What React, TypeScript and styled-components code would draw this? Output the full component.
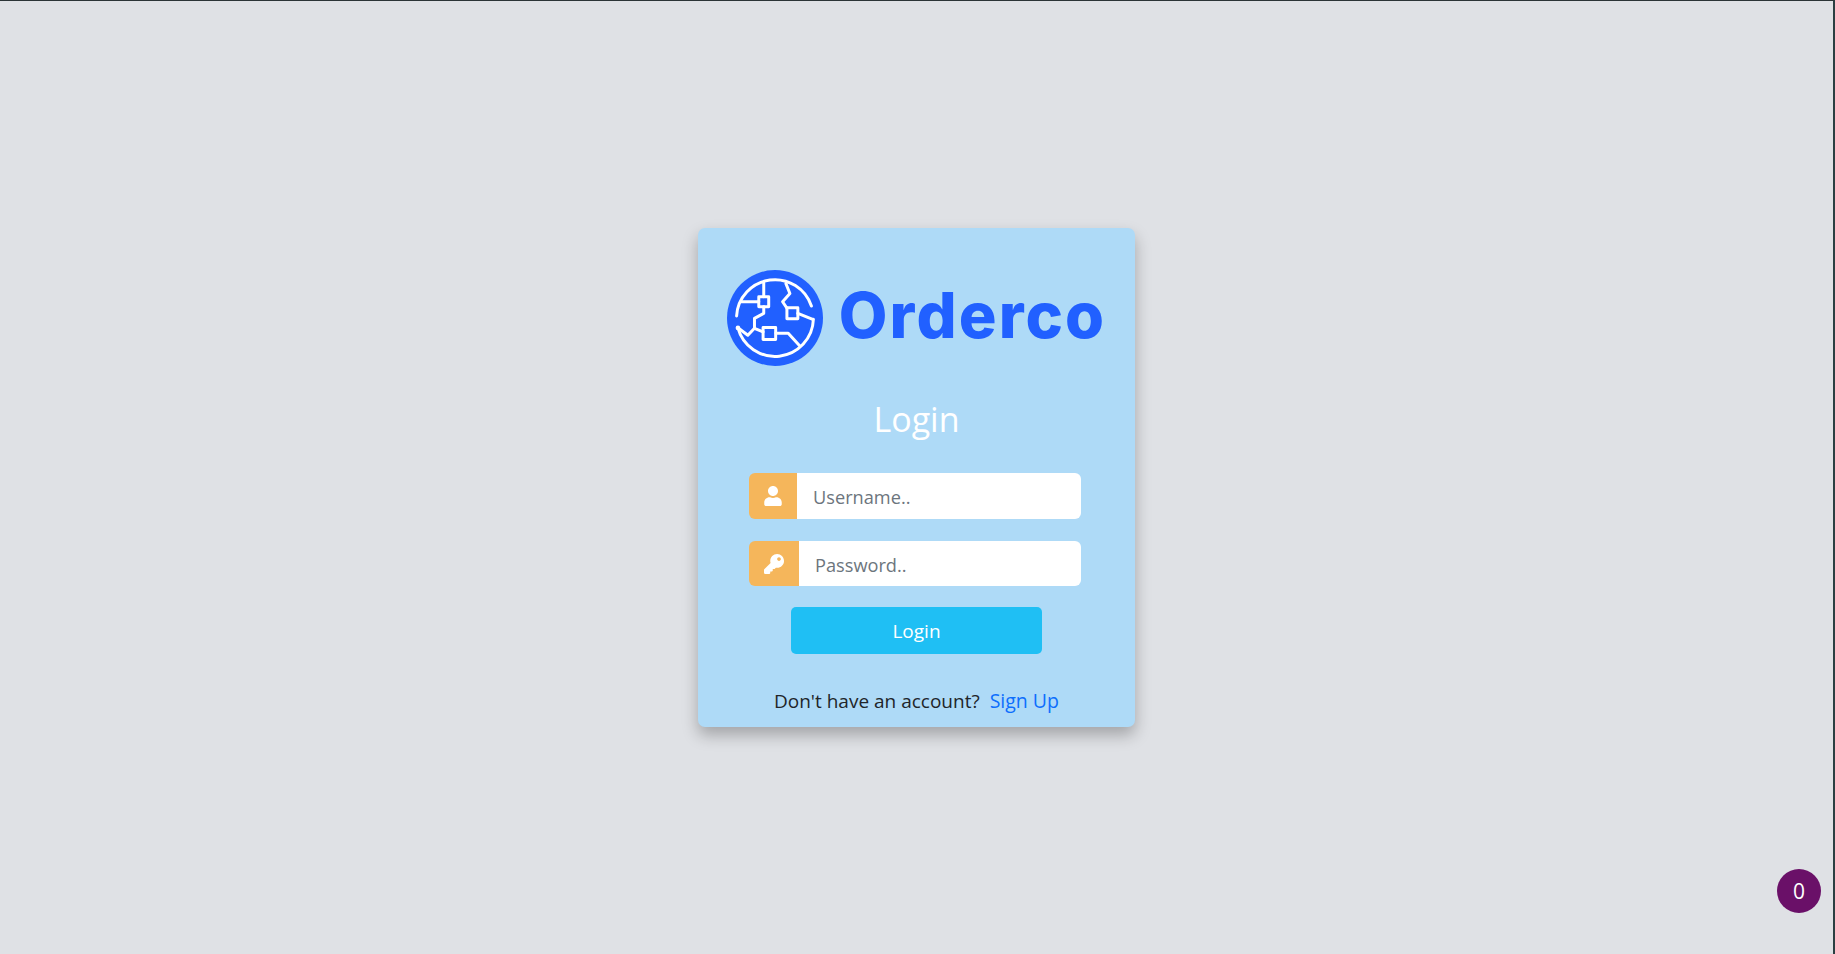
import React from 'react';
import styled, { createGlobalStyle } from 'styled-components';
import { FaKey, FaUser } from 'react-icons/fa';

const GlobalStyle = createGlobalStyle`
  html, body {
    margin: 0;
    padding: 0;
  }

  body {
    font-family: "Open Sans", "Noto Sans", sans-serif;
    color: #212529;
  }

  * {
    box-sizing: border-box;
  }
`;

const Page = styled.div`
  min-height: 100vh;
  display: flex;
  align-items: center;
  justify-content: center;
  background: #dfe1e5;
  border-top: 1px solid #2b3436;
  border-right: 2px solid #2b3f42;
`;

const Card = styled.form`
  width: 437px;
  height: 499px;
  display: flex;
  flex-direction: column;
  align-items: center;
  padding-top: 42px;
  background: #aedaf7;
  border-radius: 7px;
  box-shadow: 0 8px 16px rgba(0, 0, 0, 0.27);
`;

const Brand = styled.div`
  display: flex;
  align-items: center;
  gap: 16px;
  height: 96px;
`;

const BrandName = styled.span`
  font-family: Inter, "Open Sans", sans-serif;
  font-size: 63px;
  line-height: 1;
  font-weight: 800;
  letter-spacing: 2.1px;
  padding-bottom: 6px;
  color: #2160ff;
  filter: blur(0.5px);
`;

const LogoSvg = styled.svg`
  flex-shrink: 0;
  filter: blur(0.4px);
`;

const Title = styled.h1`
  margin: 30px 0 0;
  font-size: 34px;
  line-height: 46px;
  font-weight: 400;
  color: #fff;
`;

const Fields = styled.div`
  width: 332px;
  margin: 31px 3px 0 0;
  display: flex;
  flex-direction: column;
  gap: 22px;
`;

const InputGroup = styled.div<{ $height: number }>`
  display: flex;
  height: ${(p) => p.$height}px;
  border-radius: 6px;
  overflow: hidden;
`;

const Addon = styled.span<{ $width: number }>`
  width: ${(p) => p.$width}px;
  flex-shrink: 0;
  display: flex;
  align-items: center;
  justify-content: center;
  background: #f5b65b;
  color: #fff;
  font-size: 20px;
`;

const Input = styled.input`
  flex: 1;
  min-width: 0;
  border: 0;
  outline: 0;
  padding: 2px 16px 0;
  background: #fff;
  font: inherit;
  font-size: 18.2px;
  color: #212529;

  &::placeholder {
    color: #6c757d;
    opacity: 1;
  }
`;

const SubmitButton = styled.button`
  width: 251px;
  height: 47px;
  margin-top: 21px;
  border: 0;
  border-radius: 5px;
  background: #1fbff4;
  color: #fff;
  font: inherit;
  font-size: 19px;
`;

const Footer = styled.p`
  margin: 33px 0 0;
  display: flex;
  gap: 10px;
  font-size: 19px;
  line-height: 28px;
`;

const SignUp = styled.a`
  color: #0d6efd;
  font-size: 19.5px;
  text-decoration: none;
`;

const CounterBadge = styled.div`
  position: fixed;
  left: 1777px;
  top: 869px;
  width: 44px;
  height: 44px;
  display: flex;
  align-items: center;
  justify-content: center;
  border-radius: 50%;
  background: #6a1068;
  color: #fff;
  font-size: 21px;
`;

const LogoMark: React.FC = () => (
  <LogoSvg width="96" height="96" viewBox="37 29 290 290" aria-hidden="true">
    <circle cx="182" cy="174" r="145" fill="#2160ff" />
    <g fill="none" stroke="#fff" strokeWidth="9" strokeLinecap="round" strokeLinejoin="round">
      <path d="M292 138A116 116 0 0 0 66 168" />
      <path d="M70 204A116 116 0 0 0 298 178" />
      <path d="M80 125H133M148 66V110M148 140V160L120 175V205L100 226L72 205" />
      <path d="M120 205L146 216M215 70L227 100L205 125L218 144M251 160L296 178M185 220H222L255 256" />
      <rect x="133" y="110" width="30" height="30" />
      <rect x="218" y="143" width="33" height="33" />
      <rect x="146" y="203" width="38" height="36" />
    </g>
    <circle cx="70" cy="204" r="7" fill="#fff" />
  </LogoSvg>
);

export default function App() {
  return (
    <Page>
      <GlobalStyle />
      <Card onSubmit={(e) => e.preventDefault()}>
        <Brand>
          <LogoMark />
          <BrandName>Orderco</BrandName>
        </Brand>
        <Title>Login</Title>
        <Fields>
          <InputGroup $height={46}>
            <Addon $width={48}>
              <FaUser />
            </Addon>
            <Input type="text" placeholder="Username.." />
          </InputGroup>
          <InputGroup $height={45}>
            <Addon $width={50}>
              <FaKey />
            </Addon>
            <Input type="password" placeholder="Password.." />
          </InputGroup>
        </Fields>
        <SubmitButton type="submit">Login</SubmitButton>
        <Footer>
          <span>Don't have an account?</span>
          <SignUp href="#">Sign Up</SignUp>
        </Footer>
      </Card>
      <CounterBadge>0</CounterBadge>
    </Page>
  );
}
